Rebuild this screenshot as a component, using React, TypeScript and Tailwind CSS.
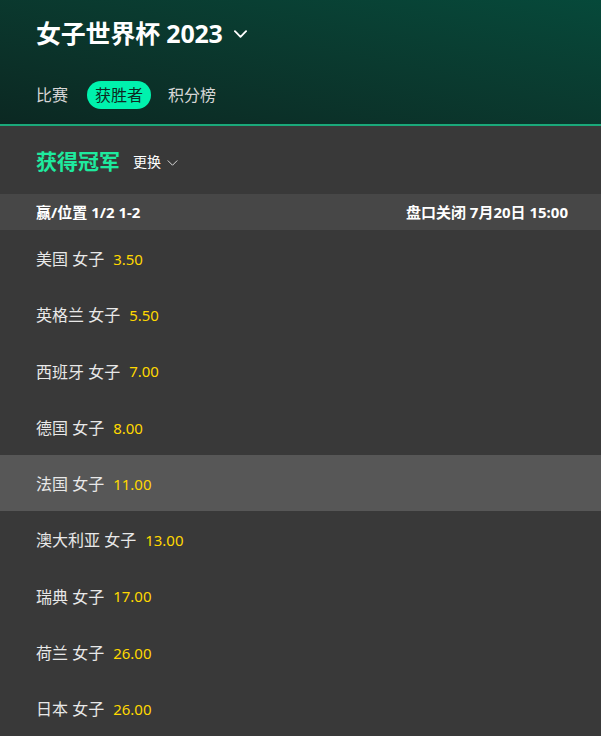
import React from "react";

const rows = [
  { name: "美国 女子", odds: "3.50" },
  { name: "英格兰 女子", odds: "5.50" },
  { name: "西班牙 女子", odds: "7.00" },
  { name: "德国 女子", odds: "8.00" },
  { name: "法国 女子", odds: "11.00", hl: true },
  { name: "澳大利亚 女子", odds: "13.00" },
  { name: "瑞典 女子", odds: "17.00" },
  { name: "荷兰 女子", odds: "26.00" },
  { name: "日本 女子", odds: "26.00" },
];

function Chevron({ className, w = 2 }: { className?: string; w?: number }) {
  return (
    <svg viewBox="0 0 14 8" className={className} fill="none" stroke="currentColor" strokeWidth={w} strokeLinecap="round" strokeLinejoin="round">
      <path d="M1 1l6 6 6-6" />
    </svg>
  );
}

export default function App() {
  return (
    <div
      className="w-[601px] h-[736px] overflow-hidden bg-[#393939]"
      style={{ fontFamily: '"Noto Sans", "Noto Sans CJK SC", sans-serif' }}
    >
      <div className="h-[124px] bg-gradient-to-tr from-[#0b2822] to-[#06493a] flex flex-col pl-[36px]">
        <div className="flex items-center h-[66px]">
          <span className="text-[25px] font-bold text-white leading-none tracking-[-0.2px]">女子世界杯 2023</span>
          <Chevron className="w-[13px] h-[8px] ml-[11px] mt-[1px] text-white" w={2} />
        </div>
        <div className="flex items-center h-[28px] mt-[15px] text-[16px]">
          <span className="text-[#d6d6d6] mr-[19px]">比赛</span>
          <span className="bg-[#00f2ad] text-[#0d2a22] rounded-full h-[28px] px-[8px] flex items-center mr-[17px]">获胜者</span>
          <span className="text-[#d6d6d6]">积分榜</span>
        </div>
      </div>
      <div className="h-[2px] bg-[#1aa97a]" />
      <div className="h-[68px] flex items-center pl-[36px] pt-[3px]">
        <span className="text-[21px] font-bold text-[#1eea9f]">获得冠军</span>
        <span className="text-[14px] text-white ml-[13px]">更换</span>
        <Chevron className="w-[11px] h-[6px] ml-[6px] mt-[2px] text-[#dcdcdc]" w={1.3} />
      </div>
      <div className="h-[36px] bg-[#474747] flex items-center justify-between pl-[36px] pr-[33px] text-[15px] font-bold text-white">
        <span>赢/位置 1/2 1-2</span>
        <span>盘口关闭 7月20日 15:00</span>
      </div>
      {rows.map((r) => (
        <div
          key={r.name}
          className={`h-[56.25px] flex items-center pl-[36px] pt-[2px] ${r.hl ? "bg-[#575757]" : ""}`}
        >
          <span className="text-[#e8e8e8] text-[16px]">{r.name}</span>
          <span className="text-[#ffd800] text-[15px] ml-[9px]">{r.odds}</span>
        </div>
      ))}
    </div>
  );
}
